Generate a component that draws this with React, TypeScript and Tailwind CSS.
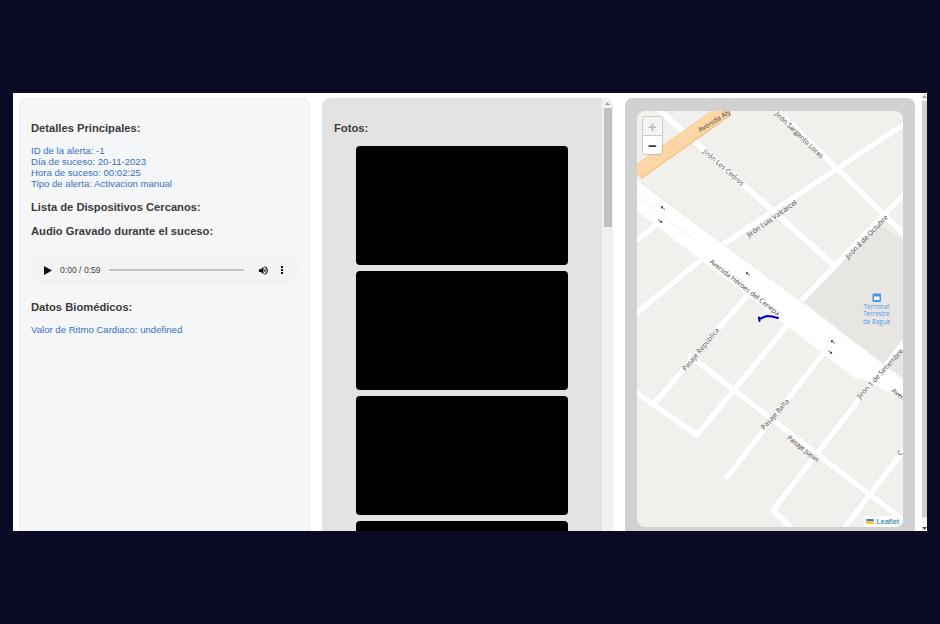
import React from "react";

const font = { fontFamily: '"Liberation Sans", Arial, sans-serif' };

function Heading({ children, className = "" }: { children: React.ReactNode; className?: string }) {
  return <h3 className={`text-[11.2px] leading-[14px] font-bold text-[#3b3b3b] ${className}`}>{children}</h3>;
}

const roads: [string, number][] = [
  ["M657 108 L835 266", 6.5],
  ["M775 108 L903 233", 6],
  ["M716 249 L903 125", 6],
  ["M797 305 L903 195", 6],
  ["M637 313 L703 258", 6],
  ["M637 240 L655 226", 6],
  ["M653 405 L750 292", 6],
  ["M637 393 L697 435 L790 322", 6],
  ["M690 356 L903 520", 6],
  ["M727 477 L826 350", 6],
  ["M793 530 L773 510 L868 388", 6],
  ["M884 368 L906 340", 6],
  ["M843 530 L906 447", 6],
];

const labels: [string, number, number, number][] = [
  ["Avenida Aly", 699, 131, -32],
  ["Jirón Los Cedros", 704, 151, 41],
  ["Jirón Sargento Lores", 776, 113, 44],
  ["Jirón Luis Valcárcel", 748, 236, -35],
  ["Jirón 8 de Octubre", 847, 258, -46],
  ["Avenida Héroes del Cenepa", 710, 261, 38],
  ["Pasaje República", 684, 370, -50],
  ["Pasaje Balta", 763, 429, -49],
  ["Pasaje Junín", 788, 437, 39],
  ["Jirón 1 de Setiembre", 859, 398, -48],
  ["Aven", 892, 390, 37],
  ["C", 899, 455, -50],
];

const arrows: [number, number, number][] = [
  [663, 208, 218],
  [660, 221, 38],
  [748, 274, 218],
  [833, 342, 218],
  [830, 352, 38],
];

function MapArt() {
  return (
    <svg viewBox="637 111 266 416" className="block w-full h-full">
      <rect x="637" y="111" width="266" height="416" fill="#f2f0ec" />
      <polygon points="803,301 880,225 903,240 903,378" fill="#e7e6e2" />
      <polygon points="815,313 822,312 863,349 860,356" fill="#ecebe7" stroke="#e2e1dc" strokeWidth="0.5" />
      {roads.map(([d, w]) => (
        <path key={d + "c"} d={d} fill="none" stroke="#e7e5e0" strokeWidth={w + 1} strokeLinecap="round" strokeLinejoin="round" />
      ))}
      {roads.map(([d, w]) => (
        <path key={d} d={d} fill="none" stroke="#ffffff" strokeWidth={w} strokeLinecap="round" strokeLinejoin="round" />
      ))}
      <polygon points="637,180 803,303 903,380 903,400 867,381 855,378 637,211" fill="#ffffff" />
      <path d="M637 180 L803 303" stroke="#dfddd8" strokeWidth="0.6" fill="none" />
      <path d="M637 196 L695 240" stroke="#e4e3df" strokeWidth="0.6" fill="none" />
      <path d="M637 173 L727 109" stroke="#ecbd7e" strokeWidth="15" fill="none" />
      <path d="M637 172.5 L727 108.5" stroke="#fcd6a4" strokeWidth="13.5" fill="none" />
      {arrows.map(([x, y, r]) => (
        <g key={`${x}-${y}`} transform={`translate(${x} ${y}) rotate(${r})`}>
          <path d="M-2.5 0 L1 0" stroke="#555" strokeWidth="0.8" />
          <path d="M0.5 -1.5 L3 0 L0.5 1.5 Z" fill="#333" />
        </g>
      ))}
      {labels.map(([t, x, y, r]) => (
        <text key={t} x={x} y={y} transform={`rotate(${r} ${x} ${y})`} fontSize="6.8" fill="#444" fontFamily='"Open Sans", sans-serif' dominantBaseline="middle">
          {t}
        </text>
      ))}
      <path d="M759 317.5 L759.5 321 M759.5 319 L763 317.5 L767 316 L772 316.5 L778 318" fill="none" stroke="#0000c8" strokeWidth="2" strokeLinecap="round" strokeLinejoin="round" />
      <rect x="872.5" y="293.5" width="8.5" height="8.5" rx="1" fill="#3f9be8" />
      <rect x="874" y="296.5" width="5.5" height="3.5" fill="#ffffff" />
      <g fontSize="6.2" fill="#4a9be8" textAnchor="middle" fontFamily='"Open Sans", sans-serif'>
        <text x="876.5" y="308.5">Terminal</text>
        <text x="876.5" y="316">Terrestre</text>
        <text x="876.5" y="323.5">de Bagua</text>
      </g>
    </svg>
  );
}

export default function App() {
  return (
    <div className="h-[624px] w-[940px] bg-[#0a0b26] pt-[93px] pl-[13px] overflow-hidden" style={font}>
      <div className="flex h-[438px] w-[914px] overflow-hidden bg-white">
        <div className="flex min-w-0 flex-1 gap-3 pt-[5px] pl-[6px]">
          {/* Details */}
          <section className="h-[600px] w-[291px] shrink-0 rounded-lg border border-[#ececec] bg-[#f5f6f7] pt-[22px] pl-[11px] pr-[10px]">
            <Heading>Detalles Principales:</Heading>
            <div className="mt-[10px] text-[9.6px] leading-[11px] text-[#3a71c1]">
              <p>ID de la alerta: -1</p>
              <p>Día de suceso: 20-11-2023</p>
              <p>Hora de suceso: 00:02:25</p>
              <p>Tipo de alerta: Activacion manual</p>
            </div>
            <Heading className="mt-[11px]">Lista de Dispositivos Cercanos:</Heading>
            <Heading className="mt-[10px]">Audio Gravado durante el suceso:</Heading>
            <div className="mt-[17px] flex h-[30px] items-center rounded-full bg-[#f1f3f4] pl-[13px] pr-[14px]">
              <svg width="8" height="9" viewBox="0 0 8 9" className="shrink-0"><path d="M0 0 L8 4.5 L0 9 Z" fill="#111" /></svg>
              <span className="ml-[8px] whitespace-nowrap text-[8.6px] text-[#444]">0:00 / 0:59</span>
              <div className="ml-[8px] h-[2.5px] w-[135px] rounded bg-[#c0c2c3]" />
              <svg width="11" height="11" viewBox="0 0 24 24" className="ml-[14px] shrink-0" fill="#111">
                <path d="M2 9v6h4l6 5V4L6 9H2z" />
                <path d="M14 7.5a5 5 0 0 1 0 9V7.5z" />
                <path d="M14 2.5v2.6a7.2 7.2 0 0 1 0 13.8v2.6a9.8 9.8 0 0 0 0-19z" />
              </svg>
              <div className="ml-[12px] flex flex-col gap-[1px]">
                <span className="block h-[2px] w-[2px] bg-[#111]" />
                <span className="block h-[2px] w-[2px] bg-[#111]" />
                <span className="block h-[2px] w-[2px] bg-[#111]" />
              </div>
            </div>
            <Heading className="mt-[15px]">Datos Biomédicos:</Heading>
            <p className="mt-[10px] text-[9.6px] leading-[11px] text-[#3a71c1]">Valor de Ritmo Cardiaco: undefined</p>
          </section>

          {/* Photos */}
          <section className="flex h-[600px] w-[291px] shrink-0 overflow-hidden rounded-lg bg-[#e3e3e3]">
            <div className="flex-1 pt-[23px] pl-[12px]">
              <Heading>Fotos:</Heading>
              <div className="mt-[11px] ml-[22px] flex w-[212px] flex-col gap-[6px]">
                <div className="h-[119px] rounded bg-black" />
                <div className="h-[119px] rounded bg-black" />
                <div className="h-[119px] rounded bg-black" />
                <div className="h-[119px] rounded bg-black" />
              </div>
            </div>
            <div className="flex w-[11px] flex-col items-center bg-[#f1f1f1] pt-[4px]">
              <svg width="5" height="3" viewBox="0 0 5 3"><path d="M2.5 0 L5 3 L0 3 Z" fill="#a3a3a3" /></svg>
              <div className="mt-[3px] h-[119px] w-[8px] bg-[#c1c1c1]" />
            </div>
          </section>

          {/* Map */}
          <section className="h-[600px] w-[290px] shrink-0 rounded-lg bg-[#d1d1d1] pt-[13px] px-[12px]">
            <div className="relative h-[416px] w-[266px] overflow-hidden rounded-lg">
              <MapArt />
              <div className="absolute left-[6px] top-[6px] w-[19px] overflow-hidden rounded-[3px] shadow-[0_0_0_1px_rgba(0,0,0,0.15)]">
                <div className="flex h-[19px] items-center justify-center border-b border-[#ccc] bg-[#f4f4f4] text-[15px] leading-none font-bold text-[#bbb]">+</div>
                <div className="flex h-[18px] items-center justify-center bg-white text-[15px] leading-none font-bold text-[#333]">−</div>
              </div>
              <div className="absolute right-0 bottom-0 flex items-center gap-[2px] bg-white/80 pl-[2px] pr-[4px] text-[7.6px] leading-[11px] text-[#0078a8]">
                <svg width="8" height="5" viewBox="0 0 12 8"><rect width="12" height="4" fill="#4C7BE1" /><rect y="4" width="12" height="4" fill="#FFD500" /></svg>
                <span>Leaflet</span>
              </div>
            </div>
          </section>
        </div>

        {/* Page scrollbar */}
        <div className="flex h-full w-[5px] shrink-0 flex-col items-center bg-[#f1f1f1] pt-[2px]">
          <svg width="5" height="3" viewBox="0 0 5 3" className="shrink-0"><path d="M2.5 0 L5 3 L0 3 Z" fill="#a3a3a3" /></svg>
          <div className="mt-[3px] h-[416px] w-full shrink-0 bg-[#d0d0d0]" />
          <svg width="5" height="3" viewBox="0 0 5 3" className="mt-[10px] shrink-0"><path d="M0 0 L5 0 L2.5 3 Z" fill="#555" /></svg>
        </div>
      </div>
    </div>
  );
}
